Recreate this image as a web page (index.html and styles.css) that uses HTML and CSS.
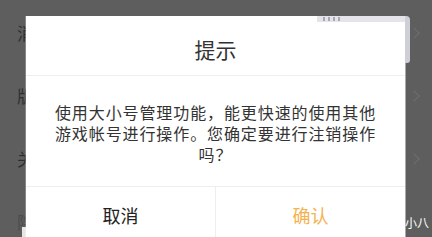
FILE: index.html
```html
<!DOCTYPE html>
<html lang="zh">
<head>
<meta charset="utf-8">
<link rel="stylesheet" href="styles.css">
</head>
<body>
<div class="page">
  <ul class="list">
    <li class="row"><span class="label">消</span><span class="chev"></span></li>
    <li class="row"><span class="label">版</span><span class="chev"></span></li>
    <li class="row"><span class="label">关</span><span class="chev"></span></li>
    <li class="row row-dim"><span class="label">隐</span></li>
  </ul>
  <div class="stub"></div>
  <div class="dialog">
    <div class="title">提示</div>
    <div class="msg">使用大小号管理功能，能更快速的使用其他<br>游戏帐号进行操作。您确定要进行注销操作<br>吗？</div>
    <div class="actions">
      <div class="btn">取消</div>
      <div class="btn btn-ok">确认</div>
    </div>
  </div>
  <div class="ghost"><div class="ghost-top"><span class="ghost-dots"></span></div><div class="ghost-side"></div></div>
  <div class="mark">小八</div>
</div>
</body>
</html>
```

FILE: styles.css
```css
* { box-sizing: border-box; }
html, body { margin: 0; padding: 0; }
body {
  width: 432px;
  height: 237px;
  overflow: hidden;
  background: #5e5e5e;
  font-family: "Noto Sans CJK SC", "Noto Sans", sans-serif;
}
.page {
  position: relative;
  width: 432px;
  height: 237px;
  overflow: hidden;
}
.list {
  list-style: none;
  margin: 0;
  padding: 1px 0 0 0;
}
.row {
  height: 63px;
  display: flex;
  align-items: center;
  justify-content: space-between;
  padding: 0 14px 0 17px;
}
.label {
  font-size: 17px;
  color: #2e2e2e;
}
.row-dim .label { color: #4c4c4c; }
.chev {
  width: 8px;
  height: 8px;
  border-top: 1.5px solid #6e6e6e;
  border-right: 1.5px solid #6e6e6e;
  transform: rotate(45deg);
}
.stub {
  position: absolute;
  left: 22px;
  top: 227px;
  width: 6px;
  height: 12px;
  background: #e6e6e6;
}
.dialog {
  position: absolute;
  left: 26px;
  top: 16px;
  width: 379px;
  height: 240px;
  background: #fff;
  display: flex;
  flex-direction: column;
  box-shadow: -1px 0 0 rgba(255,255,255,0.25), 1px 0 0 rgba(220,220,228,0.6);
}
.ghost {
  position: absolute;
  left: 317px;
  top: 16px;
  width: 93px;
  height: 47px;
  display: flex;
  align-items: flex-start;
}
.ghost-top {
  flex: 1;
  height: 6px;
  position: relative;
  background-color: #e4e4ea;
}
.ghost-dots {
  position: absolute;
  left: 6px;
  top: 1px;
  width: 20px;
  height: 4px;
  background-image: repeating-linear-gradient(90deg, #a8a8b4 0px, #a8a8b4 2px, #e4e4ea 2px, #e4e4ea 5px);
}
.ghost-side {
  width: 5px;
  height: 47px;
  background-color: #cfcfd8;
  border-top-right-radius: 4px;
  border-bottom-right-radius: 3px;
}
.title {
  height: 60px;
  display: flex;
  align-items: center;
  justify-content: center;
  font-size: 21px;
  color: #333;
  border-bottom: 1px solid #eeeeee;
  padding-top: 6px;
}
.msg {
  height: 111px;
  padding: 26px 20px 0 20px;
  text-align: center;
  font-size: 16px;
  line-height: 21px;
  letter-spacing: 0.9px;
  color: #333;
  border-bottom: 1px solid #eeeeee;
}
.actions {
  display: flex;
  flex: 1;
}
.btn {
  flex: 1;
  height: 56px;
  display: flex;
  align-items: center;
  justify-content: center;
  font-size: 18px;
  color: #222;
}
.btn + .btn { border-left: 1px solid #eeeeee; }
.btn-ok { color: #f4b24f; }
.mark {
  position: absolute;
  left: 405px;
  top: 215px;
  font-size: 12px;
  color: #fff;
  line-height: 16px;
}
```
